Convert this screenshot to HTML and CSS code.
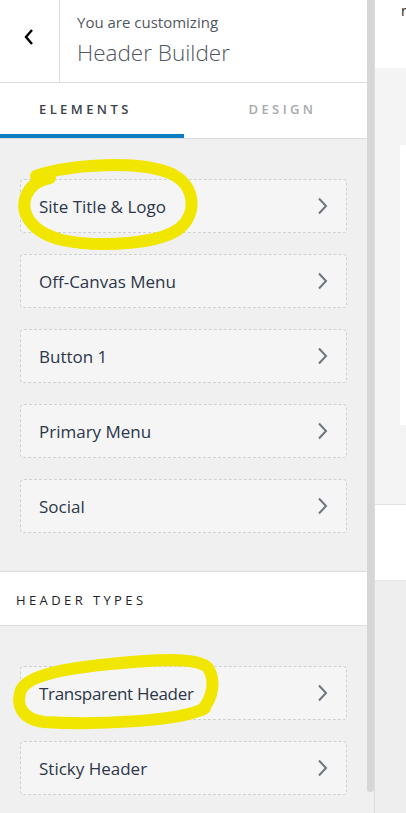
FILE: index.html
```html
<!DOCTYPE html>
<html lang="en">
<head>
<meta charset="utf-8">
<title>Header Builder</title>
<link rel="stylesheet" href="styles.css">
</head>
<body>
<div class="page">
  <aside class="panel">
    <header class="head">
      <button class="back" aria-label="Back">
        <svg width="12" height="18" viewBox="0 0 12 18"><path d="M9 2 L3 9 L9 16" fill="none" stroke="#000" stroke-width="2.4"/></svg>
      </button>
      <div class="titles">
        <span class="sub">You are customizing</span>
        <span class="title">Header Builder</span>
      </div>
    </header>
    <nav class="tabs">
      <div class="tab tab-active">ELEMENTS</div>
      <div class="tab tab-idle">DESIGN</div>
    </nav>
    <section class="list list-first">
      <div class="item"><span>Site Title &amp; Logo</span><svg class="chev" width="12" height="18" viewBox="0 0 12 18"><path d="M2 1.5 L9 9 L2 16.5" fill="none" stroke="#6f7680" stroke-width="2"/></svg></div>
      <div class="item"><span>Off-Canvas Menu</span><svg class="chev" width="12" height="18" viewBox="0 0 12 18"><path d="M2 1.5 L9 9 L2 16.5" fill="none" stroke="#6f7680" stroke-width="2"/></svg></div>
      <div class="item"><span>Button 1</span><svg class="chev" width="12" height="18" viewBox="0 0 12 18"><path d="M2 1.5 L9 9 L2 16.5" fill="none" stroke="#6f7680" stroke-width="2"/></svg></div>
      <div class="item"><span>Primary Menu</span><svg class="chev" width="12" height="18" viewBox="0 0 12 18"><path d="M2 1.5 L9 9 L2 16.5" fill="none" stroke="#6f7680" stroke-width="2"/></svg></div>
      <div class="item"><span>Social</span><svg class="chev" width="12" height="18" viewBox="0 0 12 18"><path d="M2 1.5 L9 9 L2 16.5" fill="none" stroke="#6f7680" stroke-width="2"/></svg></div>
    </section>
    <h2 class="section-title">HEADER TYPES</h2>
    <section class="list">
      <div class="item"><span class="narrow">Transparent Header</span><svg class="chev" width="12" height="18" viewBox="0 0 12 18"><path d="M2 1.5 L9 9 L2 16.5" fill="none" stroke="#6f7680" stroke-width="2"/></svg></div>
      <div class="item"><span>Sticky Header</span><svg class="chev" width="12" height="18" viewBox="0 0 12 18"><path d="M2 1.5 L9 9 L2 16.5" fill="none" stroke="#6f7680" stroke-width="2"/></svg></div>
    </section>
  </aside>
  <div class="scroll"><div class="thumb"></div></div>
  <main class="preview">
    <div class="pv-top"><span class="pv-glyph">r</span></div>
    <div class="pv-gray"><div class="pv-card"></div></div>
    <div class="pv-white"></div>
    <div class="pv-foot"></div>
  </main>
  <svg class="marks" width="406" height="813" viewBox="0 0 406 813">
    <path d="M36 176 C70 164 140 160 172 174 C196 186 197 214 180 228 C160 244 100 248 62 240 C30 232 20 212 26 196 C30 186 38 180 50 178" fill="none" stroke="#f1e600" stroke-width="12" stroke-linecap="round" stroke-linejoin="round"/>
    <path d="M205 708 C180 722 90 725 44 722 C20 719 16 703 21 690 C28 674 70 668 110 664 C150 660 198 656 208 668 C216 680 213 698 202 710" fill="none" stroke="#f1e600" stroke-width="12" stroke-linecap="round" stroke-linejoin="round"/>
  </svg>
</div>
</body>
</html>
```
FILE: styles.css
```css
html, body {
  margin: 0;
  padding: 0;
}
body {
  width: 406px;
  height: 813px;
  overflow: hidden;
  font-family: "Open Sans", "Noto Sans", sans-serif;
  background: #fff;
}
.page {
  position: relative;
  display: flex;
  width: 406px;
  height: 813px;
}
.panel {
  width: 367px;
  flex: none;
  background: #f0f0f1;
  display: flex;
  flex-direction: column;
  overflow: hidden;
}
.panel > * {
  flex: none;
}
.head {
  display: flex;
  height: 82px;
  background: #fff;
  border-bottom: 1px solid #dcdcde;
}
.back {
  width: 60px;
  flex: none;
  border: 0;
  border-right: 1px solid #dcdcde;
  background: #fff;
  padding: 0;
  margin: 0;
  display: flex;
  align-items: center;
  justify-content: center;
}
.back svg {
  margin-left: -2px;
  margin-top: -8px;
}
.titles {
  display: flex;
  flex-direction: column;
  padding: 10px 0 0 17px;
}
.sub {
  font-size: 15px;
  line-height: 25px;
  color: #50575e;
}
.title {
  font-size: 22.5px;
  font-weight: 300;
  line-height: 36px;
  color: #50575e;
}
.tabs {
  display: flex;
  height: 55px;
  background: #fff;
  border-bottom: 1px solid #dcdcde;
}
.tab {
  width: 50%;
  box-sizing: border-box;
  font-size: 13px;
  font-weight: 600;
  letter-spacing: 3.4px;
  line-height: 52px;
  border-bottom: 4px solid transparent;
}
.tab-active {
  color: #3c434a;
  padding-left: 39px;
  border-bottom-color: #0b7cbf;
}
.tab-idle {
  color: #a7aaad;
  padding-left: 65px;
}
.list {
  display: flex;
  flex-direction: column;
  gap: 21px;
  padding: 40px 20px 39px 20px;
}
.list-first {
  padding-bottom: 38px;
}
.item {
  height: 54px;
  box-sizing: border-box;
  display: flex;
  align-items: center;
  justify-content: space-between;
  padding: 0 17px 0 18px;
  background: #f5f5f6;
  border: 1px dashed #cfd0d4;
  border-radius: 4px;
  font-size: 17px;
  color: #2c3648;
}
.narrow {
  letter-spacing: -0.3px;
}
.chev {
  flex: none;
}
.section-title {
  margin: 0;
  height: 53px;
  box-sizing: content-box;
  background: #fff;
  border-top: 1px solid #dcdcde;
  border-bottom: 1px solid #dcdcde;
  padding-left: 16px;
  font-size: 13px;
  font-weight: 500;
  letter-spacing: 3.4px;
  line-height: 56px;
  color: #1d2327;
}
.scroll {
  width: 7px;
  flex: none;
  background: #efefef;
  border-right: 1px solid #dcdcdc;
}
.thumb {
  height: 792px;
  background: #d6d6d6;
  border-radius: 0 0 4px 4px;
}
.preview {
  flex: 1;
  display: flex;
  flex-direction: column;
  overflow: hidden;
  background: #eeeeee;
}
.preview > * {
  flex: none;
}
.pv-top {
  height: 68px;
  background: #fff;
  position: relative;
}
.pv-glyph {
  position: absolute;
  left: 26px;
  top: 1px;
  font-size: 14px;
  color: #1d2327;
  line-height: 20px;
}
.pv-gray {
  height: 437px;
  background: #f4f4f4;
  border-bottom: 1px solid #e2e2e2;
  padding-top: 77px;
  box-sizing: border-box;
}
.pv-card {
  margin-left: 25px;
  height: 280px;
  background: #fff;
}
.pv-white {
  height: 75px;
  background: #fff;
  border-bottom: 1px solid #e2e2e2;
}
.pv-foot {
  flex: 1;
  background: #eeeeee;
}
.marks {
  position: absolute;
  left: 0;
  top: 0;
  pointer-events: none;
}
```
